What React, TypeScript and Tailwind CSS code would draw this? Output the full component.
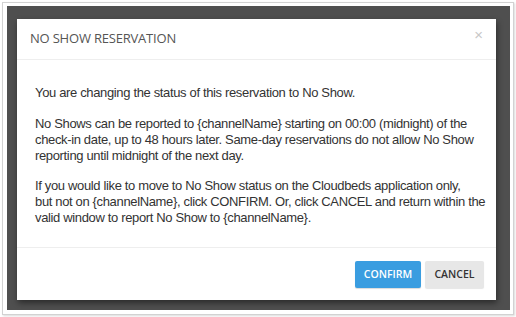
export default function App() {
  return (
    <div className="w-[516px] h-[317px] bg-white p-[2px]">
      <div className="w-full h-full border border-[#d2d2d2] pt-[3px] pl-[4px] shadow-[1px_1px_2px_rgba(0,0,0,0.15)]">
        <div className="w-[503px] h-[304px] bg-[#4f4f4f] pt-[13px] pl-[10px]">
          <div className="w-[479px] h-[281px] bg-white flex flex-col shadow-[1px_3px_6px_rgba(0,0,0,0.45)]">
            <div className="h-[41px] flex items-center justify-between pl-[13px] pr-[13px] border-b border-[#eeeeee]">
              <h3 className="text-[13px] text-[#555555] font-['Open_Sans',sans-serif] tracking-[-0.2px]">NO SHOW RESERVATION</h3>
              <button className="text-[#c8c8c8] text-[15px] leading-none font-['Liberation_Sans',sans-serif] -mt-[10px]">×</button>
            </div>
            <div className="flex-1 pl-[18px] pr-[4px] pt-[25px] text-[13px] leading-[16px] text-[#333333] font-['Liberation_Sans',sans-serif] tracking-[-0.35px] whitespace-nowrap">
              <p>You are changing the status of this reservation to No Show.</p>
              <p className="mt-[15px]">
                No Shows can be reported to {'{channelName}'} starting on 00:00 (midnight) of the<br />
                check-in date, up to 48 hours later. Same-day reservations do not allow No Show<br />
                reporting until midnight of the next day.
              </p>
              <p className="mt-[14px]">
                If you would like to move to No Show status on the Cloudbeds application only,<br />
                but not on {'{channelName}'}, click CONFIRM. Or, click CANCEL and return within the<br />
                valid window to report No Show to {'{channelName}'}.
              </p>
            </div>
            <div className="h-[53px] border-t border-[#eeeeee] flex items-start justify-end gap-[4px] pt-[13px] pr-[12px]">
              <button className="w-[66px] h-[27px] rounded-[2px] bg-[#3a9de0] text-white text-[10.5px] font-semibold font-['Open_Sans',sans-serif] shadow-[0_1px_1px_rgba(0,0,0,0.15)]">CONFIRM</button>
              <button className="w-[59px] h-[27px] rounded-[2px] bg-[#e7e7e7] text-[#333333] text-[10.5px] font-semibold font-['Open_Sans',sans-serif] shadow-[0_1px_1px_rgba(0,0,0,0.1)]">CANCEL</button>
            </div>
          </div>
        </div>
      </div>
    </div>
  )
}
